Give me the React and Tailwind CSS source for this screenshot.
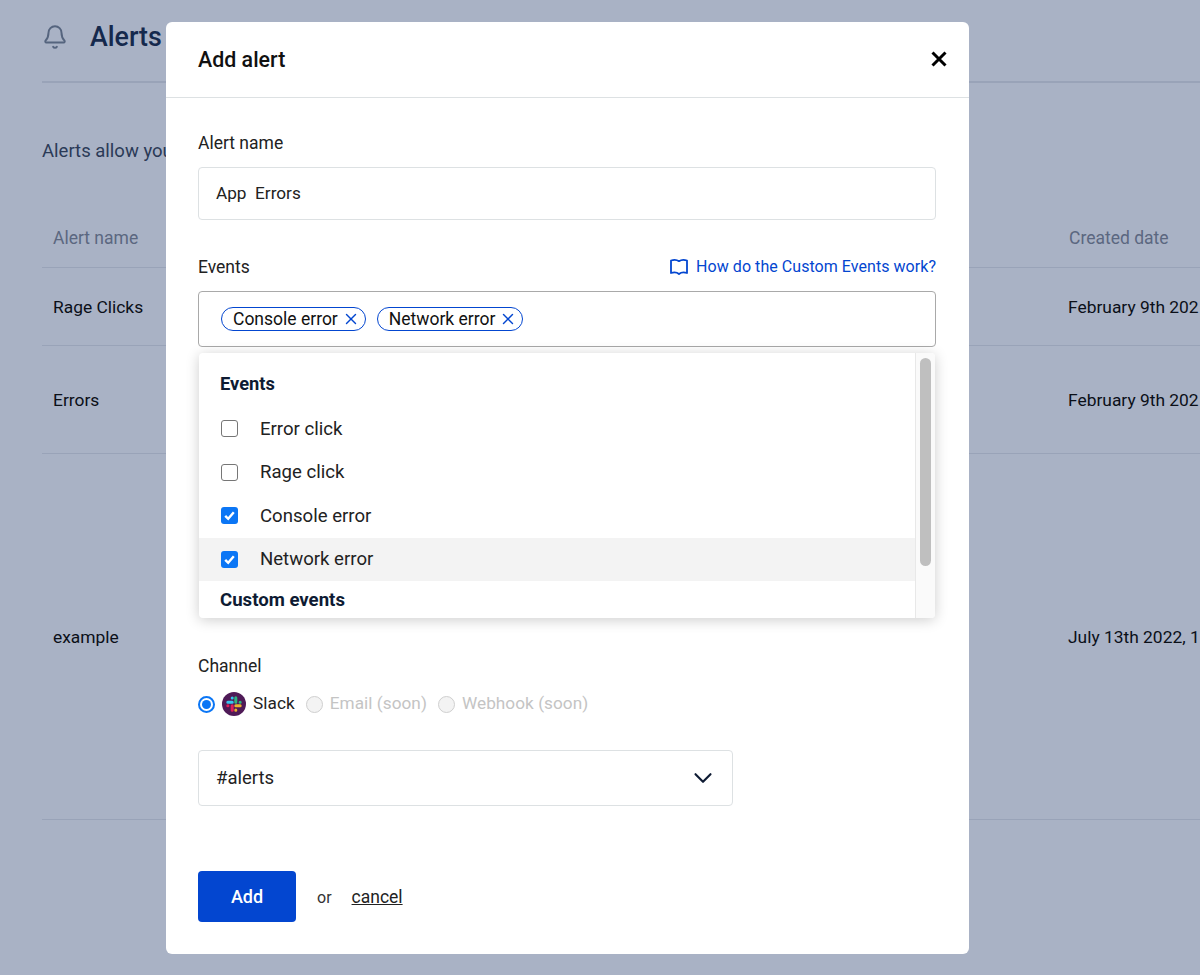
import React from "react";
import { Bell, ChevronDown, X } from "lucide-react";

// the dates run off the right side of the page in the screenshot
const rows = [
  { name: "Rage Clicks", date: "February 9th 202", h: "h-[78px]" },
  { name: "Errors", date: "February 9th 202", h: "h-[108px]" },
  { name: "example", date: "July 13th 2022, 1", h: "h-[366px]" },
];

const Chip = ({ label }) => {
  return (
    <span className="flex items-center h-[24px] pl-[11px] pr-[5px] border border-[#0346d0] rounded-full text-[17.5px] text-[#111]">
      {label}
      <X size={18} strokeWidth={1.9} className="ml-[4px] text-[#0346d0]" />
    </span>
  );
};

const CheckRow = ({ label, checked, active }) => {
  return (
    <div className={`flex items-center h-[43.5px] pl-[22px] ${active ? "bg-[#f3f3f3]" : ""}`}>
      {checked ? (
        <span className="flex items-center justify-center w-[17px] h-[17px] rounded-[3px] bg-[#0b76f5]">
          <svg width="13" height="13" viewBox="0 0 13 13" fill="none">
            <path d="M2.2 6.8 5.2 9.8 10.8 3.2" stroke="#fff" strokeWidth="2.4" />
          </svg>
        </span>
      ) : (
        <span className="w-[17px] h-[17px] rounded-[3px] border border-[#767676] bg-white" />
      )}
      <span className="ml-[22px] pt-[2px] text-[18.6px] text-[#222]">{label}</span>
    </div>
  );
};

const Radio = ({ label }) => {
  return (
    <span className="flex items-center gap-[7px] text-[#c4c4c4]">
      <span className="w-[17px] h-[17px] rounded-full border border-[#cfcfcf] bg-[#f3f3f3]" />
      {label}
    </span>
  );
};

const SlackLogo = () => {
  return (
    <svg width="24" height="24" viewBox="0 0 24 24">
      <circle cx="12" cy="12" r="12" fill="#4f1a57" />
      <g strokeWidth="3" strokeLinecap="round" fill="none">
        <path d="M10.2 6v0.1M5.8 10.2h4.4" stroke="#36c5f0" />
        <path d="M18.2 10.2h-0.1M13.8 5.8v4.4" stroke="#2eb67d" />
        <path d="M13.8 18.2v-0.1M18.2 13.8h-4.4" stroke="#ecb22e" />
        <path d="M5.8 13.8h0.1M10.2 18.2v-4.4" stroke="#e01e5a" />
      </g>
    </svg>
  );
};

const Background = () => {
  return (
    <div className="h-[975px] overflow-hidden bg-[#a9b2c5] pl-[42px] font-['Roboto',sans-serif]">
      <div className="flex items-center h-[83px] border-b-2 border-[#99a3b8] pb-[7px]">
        <Bell size={26} strokeWidth={1.8} className="text-[#55647e]" />
        <span className="ml-[22px] text-[26.8px] font-medium text-[#15294d]">Alerts</span>
      </div>
      <p className="mt-[55px] text-[18.5px] text-[#2b3a57]">Alerts allow you</p>
      <div className="mt-[42px] flex justify-between items-center h-[60px] pt-[1px] border-b border-[#99a3b8] pl-[11px] text-[#5b6780] text-[17.5px]">
        <span>Alert name</span>
        <span className="w-[131px]">Created date</span>
      </div>
      {rows.map((row) => (
        <div key={row.name} className={`flex justify-between items-center pt-[1px] border-b border-[#99a3b8] pl-[11px] text-[17.4px] text-[#0b0f18] ${row.h}`}>
          <span>{row.name}</span>
          <span className="w-[132px] whitespace-nowrap">{row.date}</span>
        </div>
      ))}
    </div>
  );
};

const App = () => {
  return (
    <div className="relative h-[975px] overflow-hidden font-['Roboto',sans-serif]">
      <Background />
      <div className="absolute left-[166px] top-[22px] w-[803px] h-[932px] bg-white rounded-[6px]">
        <div className="flex items-center justify-between h-[76px] px-[32px] border-b border-[#dde1e3]">
          <span className="text-[21.4px] font-medium text-[#111] pt-[1px]">Add alert</span>
          <svg width="18" height="18" viewBox="0 0 18 18" className="mr-[-11px] mt-[-1px]">
            <path d="M2.5 2.5 15.5 15.5M15.5 2.5 2.5 15.5" stroke="#000" strokeWidth="3" />
          </svg>
        </div>
        <div className="px-[32px]">
          <label className="block mt-[33px] leading-[24px] text-[17.5px] text-[#222]">Alert name</label>
          <div className="flex items-center mt-[12px] h-[53px] w-[738px] pl-[17px] pt-[1px] border border-[#dde1e3] rounded-[4px] text-[17.2px] text-[#222] whitespace-pre">
            App  Errors
          </div>
          <div className="relative w-[738px]">
            <div className="flex items-center justify-between mt-[35px] h-[24px] text-[16px]">
              <span className="text-[17.5px] text-[#222]">Events</span>
              <span className="flex items-center text-[#0346d0] tracking-[0.05px]">
                <svg width="20" height="18" viewBox="0 0 20 18" fill="none" className="mr-[7px]">
                  <path d="M2 2.5C5 1.5 8 1.8 10 3.2 12 1.8 15 1.5 18 2.5V15C15 14 12 14.3 10 16 8 14.3 5 14 2 15Z" stroke="#0346d0" strokeWidth="1.8" strokeLinejoin="round" />
                </svg>
                How do the Custom Events work?
              </span>
            </div>
            <div className="flex items-center gap-[11px] mt-[12px] h-[56px] pl-[22px] border border-[#a9a9a9] rounded-[4px]">
              <Chip label="Console error" />
              <Chip label="Network error" />
            </div>
            <div className="absolute left-[1px] right-[1px] top-[98px] flex h-[265px] bg-white rounded-[4px] overflow-hidden shadow-[0_2px_14px_rgba(0,0,0,0.2)]">
              <div className="flex-1 overflow-hidden">
                <div className="pl-[21px] pt-[20px] pb-[12px] leading-[22px] text-[18.3px] font-bold text-[#0e1b33]">Events</div>
                <CheckRow label="Error click" />
                <CheckRow label="Rage click" />
                <CheckRow label="Console error" checked />
                <CheckRow label="Network error" checked active />
                <div className="pl-[21px] pt-[8px] leading-[22px] text-[18.6px] font-bold text-[#0e1b33]">Custom events</div>
              </div>
              <div className="w-[20px] pt-[5px] bg-[#fafafa] border-l border-[#e8e8e8]">
                <div className="mx-auto w-[11px] h-[208px] rounded-full bg-[#bfbfbf]" />
              </div>
            </div>
          </div>
          <label className="block mt-[307px] leading-[24px] text-[17.5px] text-[#222]">Channel</label>
          <div className="flex items-center mt-[14px] h-[24px] text-[17.2px] tracking-[0.05px]">
            <span className="flex items-center justify-center w-[17px] h-[17px] rounded-full border-2 border-[#0b76f5]">
              <span className="w-[9px] h-[9px] rounded-full bg-[#0b76f5]" />
            </span>
            <span className="ml-[7px]"><SlackLogo /></span>
            <span className="ml-[7px] text-[#222]">Slack</span>
            <span className="ml-[11px]"><Radio label="Email (soon)" /></span>
            <span className="ml-[11px]"><Radio label="Webhook (soon)" /></span>
          </div>
          <div className="flex items-center justify-between mt-[34px] w-[535px] h-[56px] pl-[17px] pr-[14px] border border-[#dde1e3] rounded-[4px] text-[18.5px] text-[#222]">
            <span className="pt-[1px]">#alerts</span>
            <ChevronDown size={30} strokeWidth={1.7} className="text-[#0e1b33]" />
          </div>
          <div className="flex items-center mt-[65px]">
            <button className="w-[98px] h-[51px] rounded-[4px] bg-[#0346d0] text-white text-[18px] font-medium">Add</button>
            <span className="ml-[21px] text-[16px] text-[#333] pt-[2px]">or</span>
            <span className="ml-[20px] text-[17.5px] text-[#222] underline pt-[2px]">cancel</span>
          </div>
        </div>
      </div>
    </div>
  );
};

export default App;
